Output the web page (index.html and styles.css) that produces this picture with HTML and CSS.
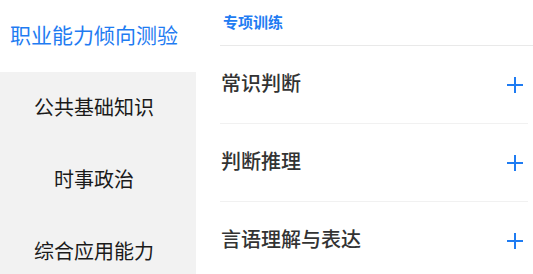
FILE: index.html
```html
<!DOCTYPE html>
<html lang="zh-CN">
<head>
    <meta charset="UTF-8">
    <meta name="viewport" content="width=device-width, initial-scale=1.0">
    <title>专项训练</title>
    <link rel="stylesheet" href="styles.css">
</head>
<body>
    <div class="page">
        <!-- 左侧科目 -->
        <aside class="sidebar">
            <div class="subject active">职业能力倾向测验</div>
            <div class="subject">公共基础知识</div>
            <div class="subject">时事政治</div>
            <div class="subject">综合应用能力</div>
        </aside>

        <!-- 右侧题型 -->
        <main class="main">
            <div class="section-title">专项训练</div>
            <div class="topic">
                <span>常识判断</span>
                <svg class="plus" width="16" height="16" viewBox="0 0 16 16"><path d="M8 0v16M0 8h16" stroke="currentColor" stroke-width="2"/></svg>
            </div>
            <div class="topic">
                <span>判断推理</span>
                <svg class="plus" width="16" height="16" viewBox="0 0 16 16"><path d="M8 0v16M0 8h16" stroke="currentColor" stroke-width="2"/></svg>
            </div>
            <div class="topic">
                <span>言语理解与表达</span>
                <svg class="plus" width="16" height="16" viewBox="0 0 16 16"><path d="M8 0v16M0 8h16" stroke="currentColor" stroke-width="2"/></svg>
            </div>
        </main>
    </div>
</body>
</html>
```

FILE: styles.css
```css
* {
    margin: 0;
    padding: 0;
    box-sizing: border-box;
}

body {
    font-family: "Noto Sans CJK SC", "Noto Sans", sans-serif;
    background-color: #fff;
    color: #333;
    overflow: hidden;
}

.page {
    display: flex;
    height: 274px;
    overflow: hidden;
}

/* Sidebar */
.sidebar {
    width: 196px;
    background-color: #f2f2f2;
    flex-shrink: 0;
}

.subject {
    height: 72px;
    display: flex;
    align-items: center;
    justify-content: center;
    padding: 0 8px 4px 0;
    font-size: 20px;
    color: #1a1a1a;
}

.subject.active {
    background-color: #fff;
    color: #1f7cf2;
    font-size: 21px;
}

/* Main */
.main {
    flex: 1;
    padding-left: 24px;
}

.section-title {
    height: 46px;
    padding: 11px 0 0 3px;
    font-size: 15px;
    font-weight: bold;
    color: #1f7cf2;
    border-bottom: 1px solid #e9e9e9;
}

.topic {
    height: 78px;
    margin-right: 5px;
    padding: 0 5px 0 1px;
    display: flex;
    align-items: center;
    justify-content: space-between;
    border-bottom: 1px solid #f1f1f1;
    font-size: 20px;
    font-weight: 500;
    color: #333;
}

.topic span {
    margin-bottom: 5px;
}

.plus {
    color: #1f7cf2;
}
```
